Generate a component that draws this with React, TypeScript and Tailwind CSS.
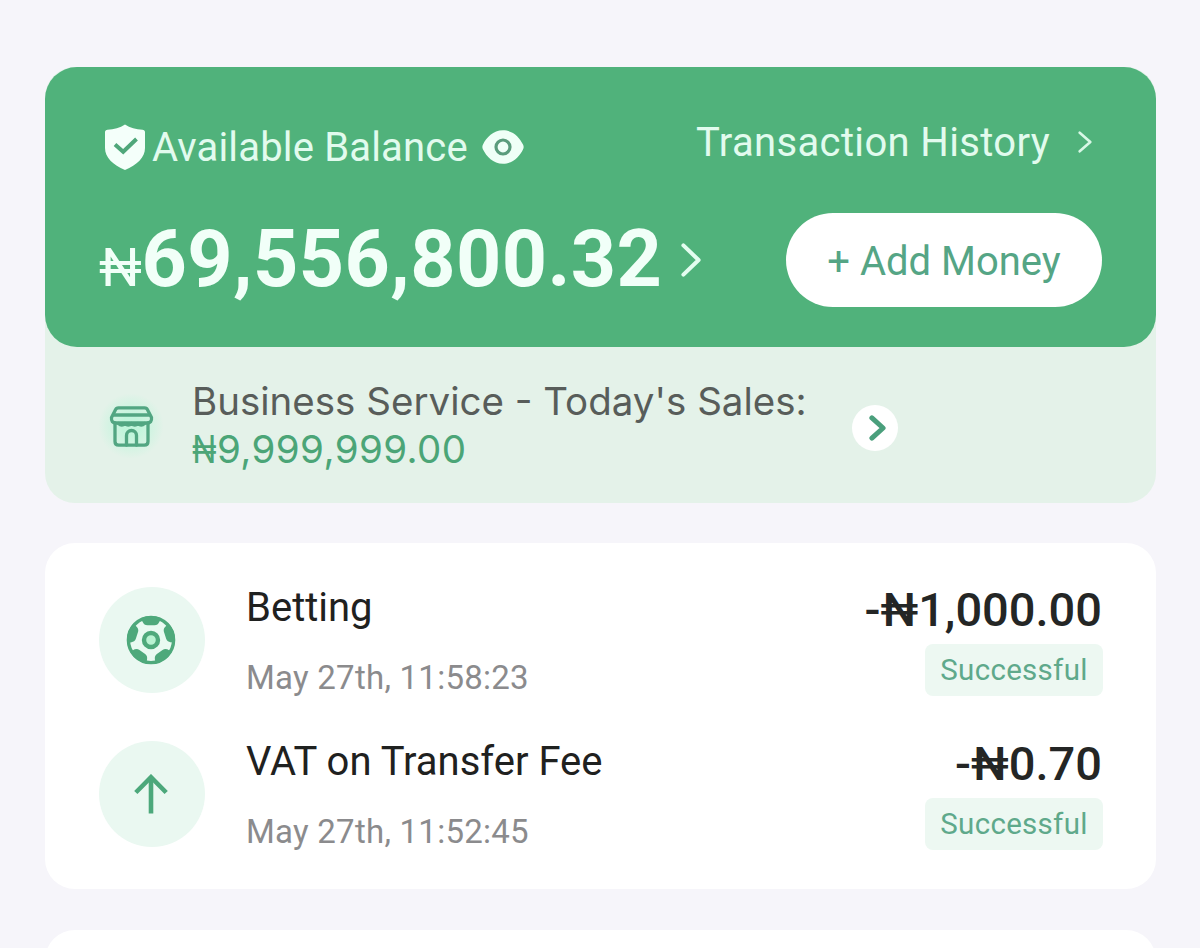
import type { ReactNode } from "react";

type Transaction = {
  title: string;
  date: string;
  amount: string;
  status: string;
  icon: ReactNode;
};

function ShieldIcon() {
  return (
    <svg width="40" height="46" viewBox="0 0 40 46" className="shrink-0">
      <path
        d="M20 0.5c5 3.4 11 5 17.5 5.2 1.5 0 2.5 1 2.5 2.400V24c0 9.500-8 17-20 22C8 41 0 33.500 0 24V8.100C0 6.700 1 5.700 2.500 5.700 9 5.500 15 3.900 20 0.500z"
        fill="#f4fffa"
      />
      <path d="M10 20.500l8.200 7.200L31.500 15" fill="none" stroke="#4fa77a" strokeWidth="4" />
    </svg>
  );
}

function EyeIcon() {
  return (
    <svg width="42" height="34" viewBox="0 0 42 34" className="shrink-0">
      <path
        d="M21 0.300C31 0.300 37.500 7.500 41 14.500q1.300 2.500 0 5C37.500 26.500 31 33.700 21 33.700S4.500 26.500 1 19.500q-1.300-2.500 0-5C4.500 7.500 11 0.300 21 0.300z"
        fill="#effff7"
      />
      <circle cx="21" cy="17" r="7" fill="none" stroke="#5a9c7c" strokeWidth="3.200" />
    </svg>
  );
}

function Chevron({ width, height, stroke, color }: { width: number; height: number; stroke: number; color: string }) {
  const s = stroke / 2 + 0.4;
  return (
    <svg width={width} height={height} className="shrink-0">
      <path
        d={`M${s} ${s}L${width - s} ${height / 2}L${s} ${height - s}`}
        fill="none"
        stroke={color}
        strokeWidth={stroke}
        strokeLinecap="round"
        strokeLinejoin="round"
      />
    </svg>
  );
}

function StoreIcon() {
  return (
    <svg width="45" height="41" viewBox="0 0 44 41" fill="none" stroke="#52a682" strokeWidth="3.300" strokeLinejoin="round" strokeLinecap="round">
      <path d="M9 1.800h26q2.300 0 3 2L42 11.500q.6 5.500-4.500 5.500h-31Q1.400 17 2 11.500L6 3.800q.7-2 3-2z" />
      <path d="M4.500 9h35" />
      <path d="M5.500 17v18.500q0 3.700 3.700 3.700h25.600q3.700 0 3.700-3.700V17" />
      <path d="M9 17.500q3.300 3 6.500 0 3.300 3 6.500 0 3.300 3 6.500 0 3.300 3 6.500 0" />
      <path d="M17 39V29.500a5 5 0 0 1 10 0V39" />
    </svg>
  );
}

function BallIcon() {
  return (
    <svg width="50" height="50" viewBox="-25 -25 50 50">
      <circle r="22.600" fill="#e9faf1" stroke="#4ea97b" strokeWidth="3.400" />
      {[0, 72, 144, 216, 288].map((angle) => (
        <path
          key={angle}
          transform={`rotate(${angle})`}
          d="M-10.500 -21.600C-8.500 -20.500 -8.500 -14.800 -3.500 -14.800H3.500C8.500 -14.800 8.500 -20.500 10.500 -21.600Q0 -26.500 -10.500 -21.600z"
          fill="#4ea97b"
        />
      ))}
      <circle r="7" fill="#b9f3d2" stroke="#4ea97b" strokeWidth="4.400" />
    </svg>
  );
}

function ArrowUpIcon() {
  return (
    <svg width="34" height="40" viewBox="0 0 34 40" fill="none" stroke="#4ca87b" strokeWidth="4.600">
      <path d="M17 39.500V3" />
      <path d="M1.800 18.500L17 3.200l15.200 15.300" />
    </svg>
  );
}

const transactions: Transaction[] = [
  {
    title: "Betting",
    date: "May 27th, 11:58:23",
    amount: "-₦1,000.00",
    status: "Successful",
    icon: <BallIcon />,
  },
  {
    title: "VAT on Transfer Fee",
    date: "May 27th, 11:52:45",
    amount: "-₦0.70",
    status: "Successful",
    icon: <ArrowUpIcon />,
  },
];

function BalanceCard() {
  return (
    <section className="h-[436px] rounded-[30px] bg-[#e4f2e9]">
      <div className="flex h-[280px] justify-between rounded-[32px] bg-[#50b27b] pr-[54px] pl-[55px]">
        <div className="pt-[57px]">
          <div className="flex h-[46px] items-center pl-[5px]">
            <ShieldIcon />
            <span className="ml-[7px] pt-0.5 text-[40px] leading-[46px] tracking-[0.17px] text-[#e2fbee]">
              Available Balance
            </span>
            <span className="ml-[14px]">
              <EyeIcon />
            </span>
          </div>
          <div className="mt-[43px] flex h-[94px] items-center">
            <div className="flex items-baseline pt-1.5 leading-[94px] text-[#f1fff8]">
              <span className="-ml-px text-[54px] tracking-[-0.3px]">₦</span>
              <span className="text-[79px] font-bold tracking-[0.45px]">69,556,800.32</span>
            </div>
            <span className="ml-[19px]">
              <Chevron width={20} height={34} stroke={4} color="#e4fdf0" />
            </span>
          </div>
        </div>

        <div className="flex w-[316px] shrink-0 flex-col items-end pt-[52px]">
          <div className="flex h-[46px] items-center gap-7 pr-[10px]">
            <span className="pt-0.5 text-[40px] leading-[46px] tracking-[0.35px] whitespace-nowrap text-[#e2fbee]">
              Transaction History
            </span>
            <Chevron width={14} height={22} stroke={2.6} color="#d8f8e6" />
          </div>
          <button className="mt-12 h-[94px] w-[316px] rounded-full bg-white pt-[3px] text-[40px] text-[#55a585]">
            + Add Money
          </button>
        </div>
      </div>

      <div className="flex h-[156px] items-center pl-[53px]">
        <div className="mt-0.5 flex size-[66px] items-center justify-center rounded-full bg-[radial-gradient(circle,#c2f5dc_20%,#e4f2e9_70%)]">
          <StoreIcon />
        </div>
        <div className="ml-7 w-[616px] font-['Inter'] text-[38.500px] leading-[48px] whitespace-nowrap">
          <p className="text-[#585d5a]">Business Service - Today&apos;s Sales:</p>
          <p className="tracking-[0.4px] text-[#4ba577]">
            <span className="-mr-[5px] inline-block origin-left scale-x-[0.83]">₦</span>
            9,999,999.00
          </p>
        </div>
        <button className="mt-1.5 ml-11 flex size-[46px] items-center justify-center rounded-full bg-white pl-1">
          <Chevron width={17} height={26} stroke={5} color="#4a9f7c" />
        </button>
      </div>
    </section>
  );
}

function TransactionRow({ transaction }: { transaction: Transaction }) {
  return (
    <li className="flex h-[106px]">
      <div className="flex size-[106px] shrink-0 items-center justify-center rounded-full bg-[#eaf8f1] pr-0.5">
        {transaction.icon}
      </div>
      <div className="ml-[41px] flex-1">
        <p className="text-[40px] leading-[41px] text-[#1f2120]">{transaction.title}</p>
        <p className="mt-[30px] text-[33px] leading-[40px] tracking-[0.25px] text-[#8b8b8d]">{transaction.date}</p>
      </div>
      <div className="-mt-[5px] flex flex-col items-end">
        <p className="pr-px text-[47px] leading-[56px] font-medium text-[#242625]">{transaction.amount}</p>
        <span className="mt-1.5 flex h-[52px] w-[178px] shrink-0 items-center justify-center rounded-lg bg-[#edf8f2] text-[29.500px] tracking-[0.3px] text-[#5fa98b]">
          {transaction.status}
        </span>
      </div>
    </li>
  );
}

export default function App() {
  return (
    <main className="h-[948px] w-[1200px] overflow-hidden bg-[#f6f5fa] pt-[67px] pr-11 pl-[45px] font-['Roboto',sans-serif]">
      <BalanceCard />
      <ul className="mt-10 flex h-[346px] flex-col gap-12 rounded-[30px] bg-white pt-11 pr-[53px] pl-[54px]">
        {transactions.map((transaction) => (
          <TransactionRow key={transaction.title} transaction={transaction} />
        ))}
      </ul>
      <section className="mt-[41px] h-24 rounded-[30px] bg-white" />
    </main>
  );
}
